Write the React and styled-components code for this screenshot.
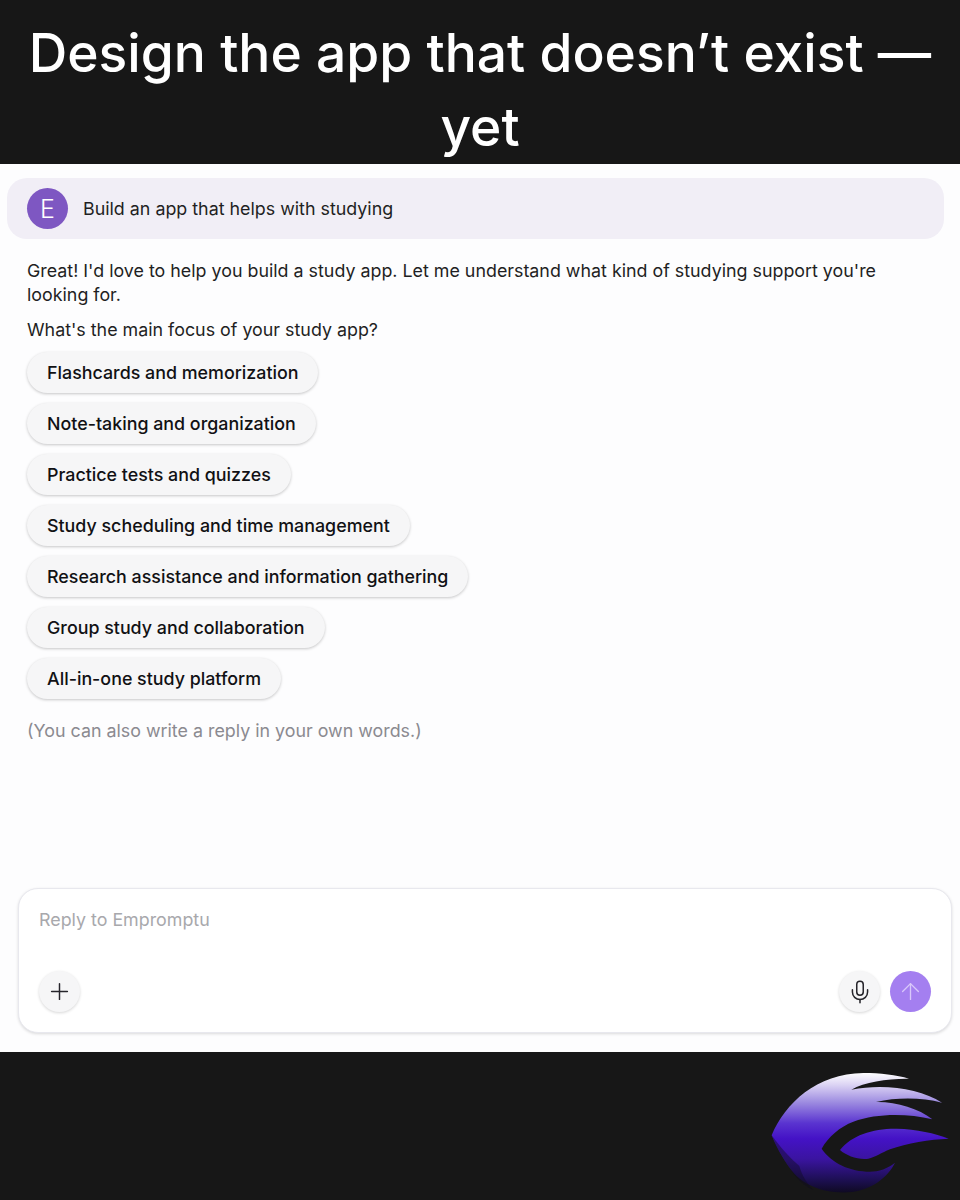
import React from "react";
import styled, { createGlobalStyle } from "styled-components";
import { Plus, Mic, ArrowUp } from "lucide-react";

const Global = createGlobalStyle`
  html, body { margin: 0; padding: 0; background: #171717; }
`;

const Page = styled.div`
  width: 960px;
  height: 1200px;
  display: flex;
  flex-direction: column;
  background: #171717;
  font-family: Inter, "Liberation Sans", sans-serif;
`;

const Header = styled.header`
  height: 164px;
  box-sizing: border-box;
  padding: 16px 20px 0;
  text-align: center;
  color: #fff;
  font-family: Inter, "Liberation Sans", sans-serif;
  font-size: 53.35px;
  font-weight: 500;
  line-height: 74px;
`;

const Chat = styled.main`
  height: 888px;
  box-sizing: border-box;
  background: #fdfdfe;
  padding: 14px 8px 19px 7px;
  display: flex;
  flex-direction: column;
`;

const Bubble = styled.div`
  height: 61px;
  width: 937px;
  box-sizing: border-box;
  padding-left: 20px;
  display: flex;
  align-items: center;
  gap: 15px;
  background: #f1eef6;
  border-radius: 20px;
  font-size: 17.85px;
  color: #1f1f23;
`;

const Avatar = styled.div`
  width: 41px;
  height: 41px;
  border-radius: 50%;
  background: #7e57c2;
  color: #fff;
  display: flex;
  align-items: center;
  justify-content: center;
  font-size: 25px;
  font-weight: 300;
`;

const Answer = styled.div`
  padding: 20px 20px 0;
  font-size: 17.85px;
  line-height: 24px;
  color: #1f1f23;
`;

const Para = styled.p`
  margin: 0 0 ${(p) => p.$after || 11}px;
`;

const Options = styled.div`
  display: flex;
  flex-direction: column;
  align-items: flex-start;
  gap: 10px;
`;

const Chip = styled.button`
  height: 41px;
  padding: 0 20px;
  border: none;
  border-radius: 21px;
  background: #f6f6f7;
  box-shadow: 0 1px 3px rgba(0, 0, 0, 0.22);
  font: 500 17.85px Inter, "Liberation Sans", sans-serif;
  color: #111114;
`;

const Hint = styled.p`
  margin: 20px 0 0;
  font-size: 17.85px;
  line-height: 24px;
  color: #8b8a90;
`;

const Composer = styled.div`
  margin: auto 0 0 11px;
  width: 934px;
  height: 145px;
  box-sizing: border-box;
  padding: 20px 20px 20px;
  display: flex;
  flex-direction: column;
  justify-content: space-between;
  background: #fff;
  border: 1px solid #e8e8ee;
  border-radius: 20px;
  box-shadow: 0 1px 3px rgba(0, 0, 0, 0.14);
`;

const Placeholder = styled.div`
  font-size: 17.85px;
  line-height: 22px;
  color: #a8a8ac;
`;

const Tools = styled.div`
  display: flex;
  align-items: center;
  gap: 10px;
`;

const Spacer = styled.div`
  flex: 1;
`;

const Round = styled.button`
  width: 41px;
  height: 41px;
  padding: 0;
  border: none;
  border-radius: 50%;
  display: flex;
  align-items: center;
  justify-content: center;
  background: ${(p) => (p.$send ? "#a47ff0" : "#f6f6f7")};
  color: ${(p) => (p.$send ? "#d9c8fa" : "#26252b")};
  box-shadow: ${(p) => (p.$send ? "none" : "0 1px 3px rgba(0, 0, 0, 0.16)")};
`;

const Footer = styled.footer`
  flex: 1;
  display: flex;
  justify-content: flex-end;
  align-items: flex-end;
`;

const Logo = () => (
  <svg width="200" height="140" viewBox="0 0 600 420">
    <defs>
      <linearGradient id="wing" gradientUnits="userSpaceOnUse" x1="0" y1="38" x2="0" y2="398">
        <stop offset="0" stopColor="#ffffff" />
        <stop offset="0.1" stopColor="#dcd4f4" />
        <stop offset="0.25" stopColor="#9c8ae0" />
        <stop offset="0.42" stopColor="#5a34d0" />
        <stop offset="0.55" stopColor="#4412c6" />
        <stop offset="0.72" stopColor="#3a14a0" />
        <stop offset="0.9" stopColor="#1c0f50" />
        <stop offset="1" stopColor="#0f0a22" />
      </linearGradient>
    </defs>
    <path
      fill="url(#wing)"
      d="M35 226 C75 130 170 40 310 39 C360 39 410 45 447 56 C385 55 315 65 274 89 C370 70 480 85 546 128 C485 112 410 112 348 126 C410 125 475 145 517 178 C440 160 350 160 280 185 C240 200 205 230 185 266 C215 310 270 335 330 335 C355 335 385 325 405 308 C385 350 335 392 265 397 C190 402 125 375 90 325 C65 290 48 258 35 226 Z"
    />
    <path
      fill="url(#wing)"
      d="M240 270 C275 225 340 205 410 206 C470 207 525 220 566 236 C510 238 440 250 390 268 C365 278 345 292 325 296 C295 300 260 288 240 270 Z"
    />
    <path
      fill="#0f0a22"
      opacity="0.45"
      d="M118 318 C125 345 140 370 160 390 C125 375 105 350 90 325 C65 290 48 258 35 226 C60 260 90 295 118 318 Z"
    />
  </svg>
);

const options = [
  "Flashcards and memorization",
  "Note-taking and organization",
  "Practice tests and quizzes",
  "Study scheduling and time management",
  "Research assistance and information gathering",
  "Group study and collaboration",
  "All-in-one study platform",
];

export default function App() {
  return (
    <Page>
      <Global />
      <Header>Design the app that doesn’t exist — yet</Header>
      <Chat>
        <Bubble>
          <Avatar>E</Avatar>
          Build an app that helps with studying
        </Bubble>
        <Answer>
          <Para>
            Great! I'd love to help you build a study app. Let me understand what kind of studying
            support you're looking for.
          </Para>
          <Para $after={10}>What's the main focus of your study app?</Para>
          <Options>
            {options.map((o) => (
              <Chip key={o}>{o}</Chip>
            ))}
          </Options>
          <Hint>(You can also write a reply in your own words.)</Hint>
        </Answer>
        <Composer>
          <Placeholder>Reply to Empromptu</Placeholder>
          <Tools>
            <Round>
              <Plus size={27} strokeWidth={1.3} />
            </Round>
            <Spacer />
            <Round>
              <Mic size={26} strokeWidth={1.4} />
            </Round>
            <Round $send>
              <ArrowUp size={27} strokeWidth={1.2} />
            </Round>
          </Tools>
        </Composer>
      </Chat>
      <Footer>
        <Logo />
      </Footer>
    </Page>
  );
}
